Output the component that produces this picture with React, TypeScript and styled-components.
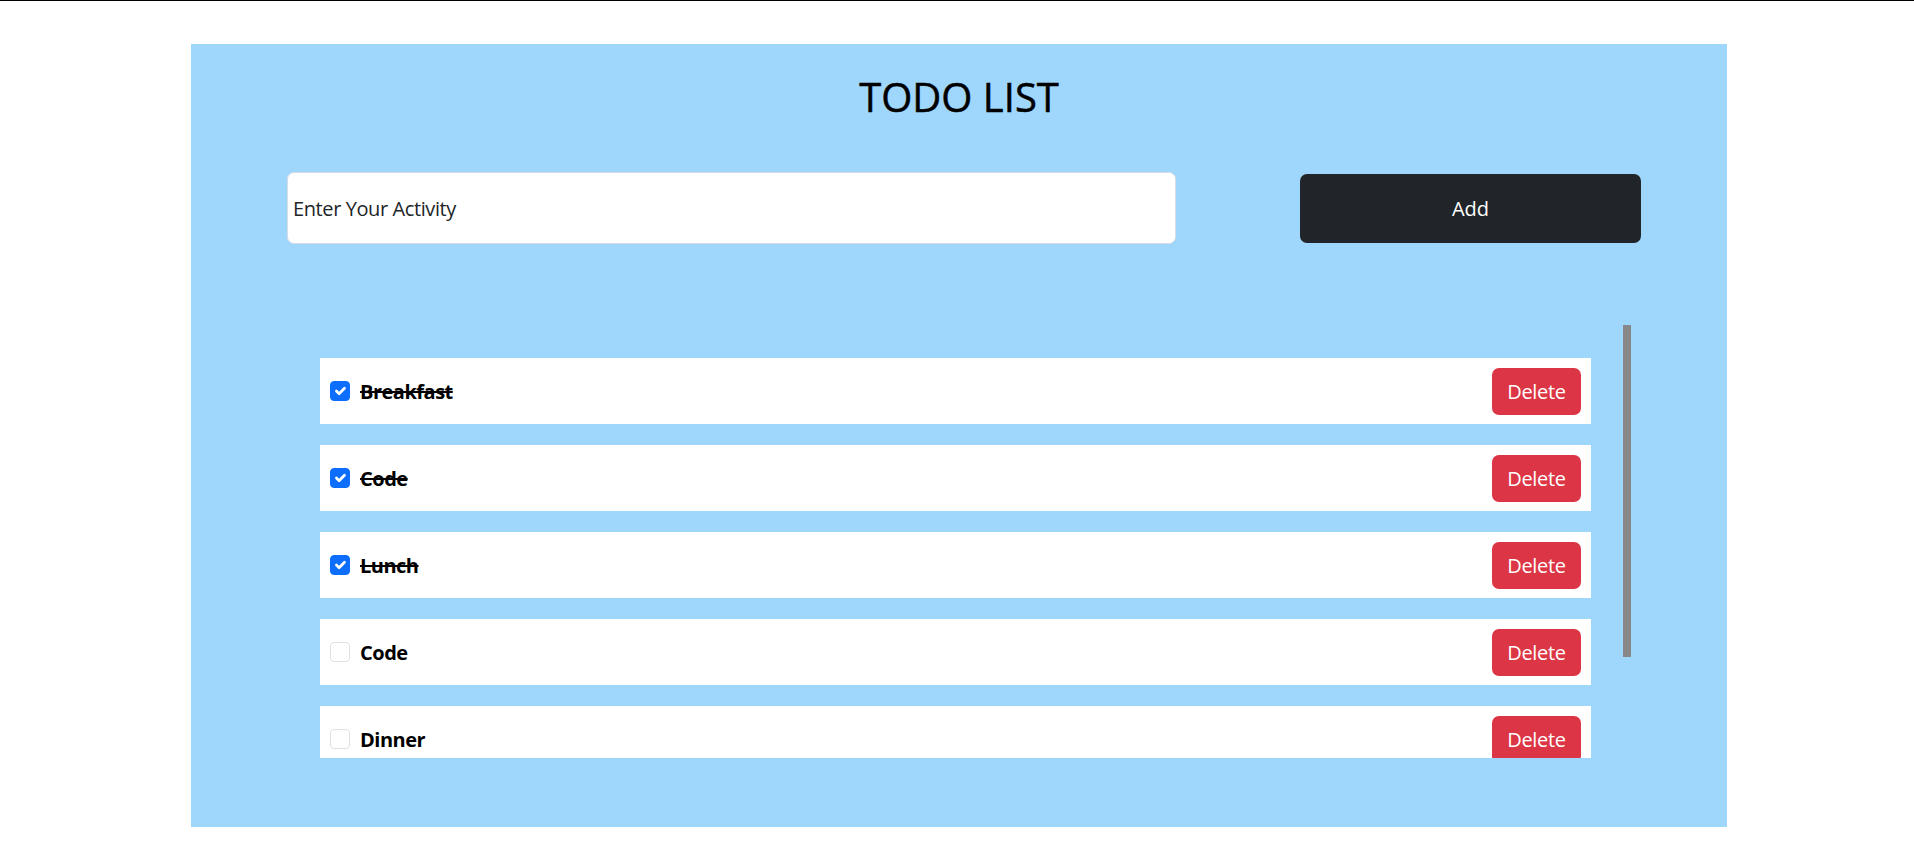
import React, { useLayoutEffect, useRef, useState } from "react";
import styled, { createGlobalStyle } from "styled-components";

const GlobalStyle = createGlobalStyle`
  html, body {
    margin: 0;
    padding: 0;
    background: #ffffff;
  }
  body {
    border-top: 1px solid #000000;
    font-family: "Open Sans", "Noto Sans", "Liberation Sans", sans-serif;
    color: #000000;
  }
  * { box-sizing: border-box; }
`;

const Panel = styled.main`
  width: 1536px;
  margin: 43px 0 0 191px;
  height: 783px;
  background: #9fd6fb;
  padding: 29px 0 0;
  display: flex;
  flex-direction: column;
`;

const Title = styled.h1`
  margin: 0;
  text-align: center;
  font-size: 40px;
  line-height: 48px;
  font-weight: 400;
  -webkit-text-stroke: 0.5px #000000;
  color: #000000;
`;

const Form = styled.form`
  display: flex;
  align-items: center;
  justify-content: space-between;
  margin-top: 51px;
  padding: 0 86px 0 96px;
`;

const Input = styled.input`
  width: 889px;
  height: 72px;
  border: 1px solid #d6dde4;
  border-radius: 7px;
  background: #ffffff;
  padding: 0 5px;
  font-family: inherit;
  font-size: 20px;
  letter-spacing: -0.4px;
  color: #212529;
  outline: none;
  &::placeholder {
    color: #212529;
    opacity: 1;
  }
`;

const AddButton = styled.button`
  width: 341px;
  height: 69px;
  border: none;
  border-radius: 7px;
  background: #212529;
  color: #ffffff;
  font-family: inherit;
  font-size: 20px;
  cursor: pointer;
`;

const ListFrame = styled.div`
  display: flex;
  margin: 81px 0 0 97px;
  width: 1343px;
  height: 433px;
`;

const List = styled.ul`
  list-style: none;
  margin: 0;
  flex: 1;
  height: 100%;
  overflow-y: auto;
  scrollbar-width: none;
  padding: 33px 32px 31px 32px;
  display: flex;
  flex-direction: column;
  gap: 21px;
  &::-webkit-scrollbar {
    display: none;
  }
`;

const ScrollTrack = styled.div`
  position: relative;
  flex: 0 0 8px;
  height: 100%;
`;

const ScrollThumb = styled.div`
  position: absolute;
  left: 0;
  right: 0;
  background: #888888;
`;

const Row = styled.li`
  flex: 0 0 66px;
  background: #ffffff;
  display: flex;
  align-items: center;
  padding: 0 10px;
`;

const Check = styled.span<{ $checked: boolean }>`
  width: 20px;
  height: 20px;
  flex: 0 0 20px;
  border-radius: 4px;
  border: 1px solid ${(p) => (p.$checked ? "#0d6efd" : "#dee2e6")};
  background: ${(p) => (p.$checked ? "#0d6efd" : "#ffffff")};
  display: flex;
  align-items: center;
  justify-content: center;
  cursor: pointer;
`;

const Label = styled.span<{ $done: boolean }>`
  margin-left: 10px;
  font-size: 20px;
  font-weight: 700;
  letter-spacing: -0.5px;
  color: #000000;
  text-decoration: ${(p) => (p.$done ? "line-through" : "none")};
  text-decoration-thickness: 2px;
  flex: 1;
`;

const DeleteButton = styled.button`
  width: 89px;
  height: 47px;
  border: none;
  border-radius: 7px;
  background: #dc3545;
  color: #ffffff;
  font-family: inherit;
  font-size: 20px;
  letter-spacing: -0.3px;
  cursor: pointer;
`;

type Todo = { id: number; text: string; done: boolean };

const initial: Todo[] = [
  { id: 1, text: "Breakfast", done: true },
  { id: 2, text: "Code", done: true },
  { id: 3, text: "Lunch", done: true },
  { id: 4, text: "Code", done: false },
  { id: 5, text: "Dinner", done: false },
  { id: 6, text: "Sleep", done: false },
];

export default function App() {
  const [todos, setTodos] = useState<Todo[]>(initial);
  const [text, setText] = useState("");
  const listRef = useRef<HTMLUListElement>(null);
  const [thumb, setThumb] = useState({ top: 0, height: 0 });

  const measure = () => {
    const el = listRef.current;
    if (!el) return;
    const { clientHeight, scrollHeight, scrollTop } = el;
    if (scrollHeight <= clientHeight) {
      setThumb({ top: 0, height: 0 });
      return;
    }
    setThumb({
      top: (scrollTop / scrollHeight) * clientHeight,
      height: (clientHeight * clientHeight) / scrollHeight,
    });
  };

  useLayoutEffect(measure, [todos]);

  const add = (e: React.FormEvent) => {
    e.preventDefault();
    if (!text.trim()) return;
    setTodos((t) => [...t, { id: Date.now(), text: text.trim(), done: false }]);
    setText("");
  };

  return (
    <>
      <GlobalStyle />
      <Panel>
        <Title>TODO LIST</Title>
        <Form onSubmit={add}>
          <Input
            placeholder="Enter Your Activity"
            value={text}
            onChange={(e) => setText(e.target.value)}
          />
          <AddButton type="submit">Add</AddButton>
        </Form>
        <ListFrame>
          <List ref={listRef} onScroll={measure}>
            {todos.map((t) => (
              <Row key={t.id}>
                <Check
                  $checked={t.done}
                  onClick={() =>
                    setTodos((all) =>
                      all.map((x) => (x.id === t.id ? { ...x, done: !x.done } : x))
                    )
                  }
                >
                  {t.done && (
                    <svg width="18" height="18" viewBox="0 0 20 20">
                      <path
                        d="M6 10l3 3 6-6"
                        fill="none"
                        stroke="#ffffff"
                        strokeWidth="3"
                        strokeLinecap="round"
                        strokeLinejoin="round"
                      />
                    </svg>
                  )}
                </Check>
                <Label $done={t.done}>{t.text}</Label>
                <DeleteButton
                  onClick={() => setTodos((all) => all.filter((x) => x.id !== t.id))}
                >
                  Delete
                </DeleteButton>
              </Row>
            ))}
          </List>
          <ScrollTrack>
            <ScrollThumb style={{ top: thumb.top, height: thumb.height }} />
          </ScrollTrack>
        </ListFrame>
      </Panel>
    </>
  );
}
